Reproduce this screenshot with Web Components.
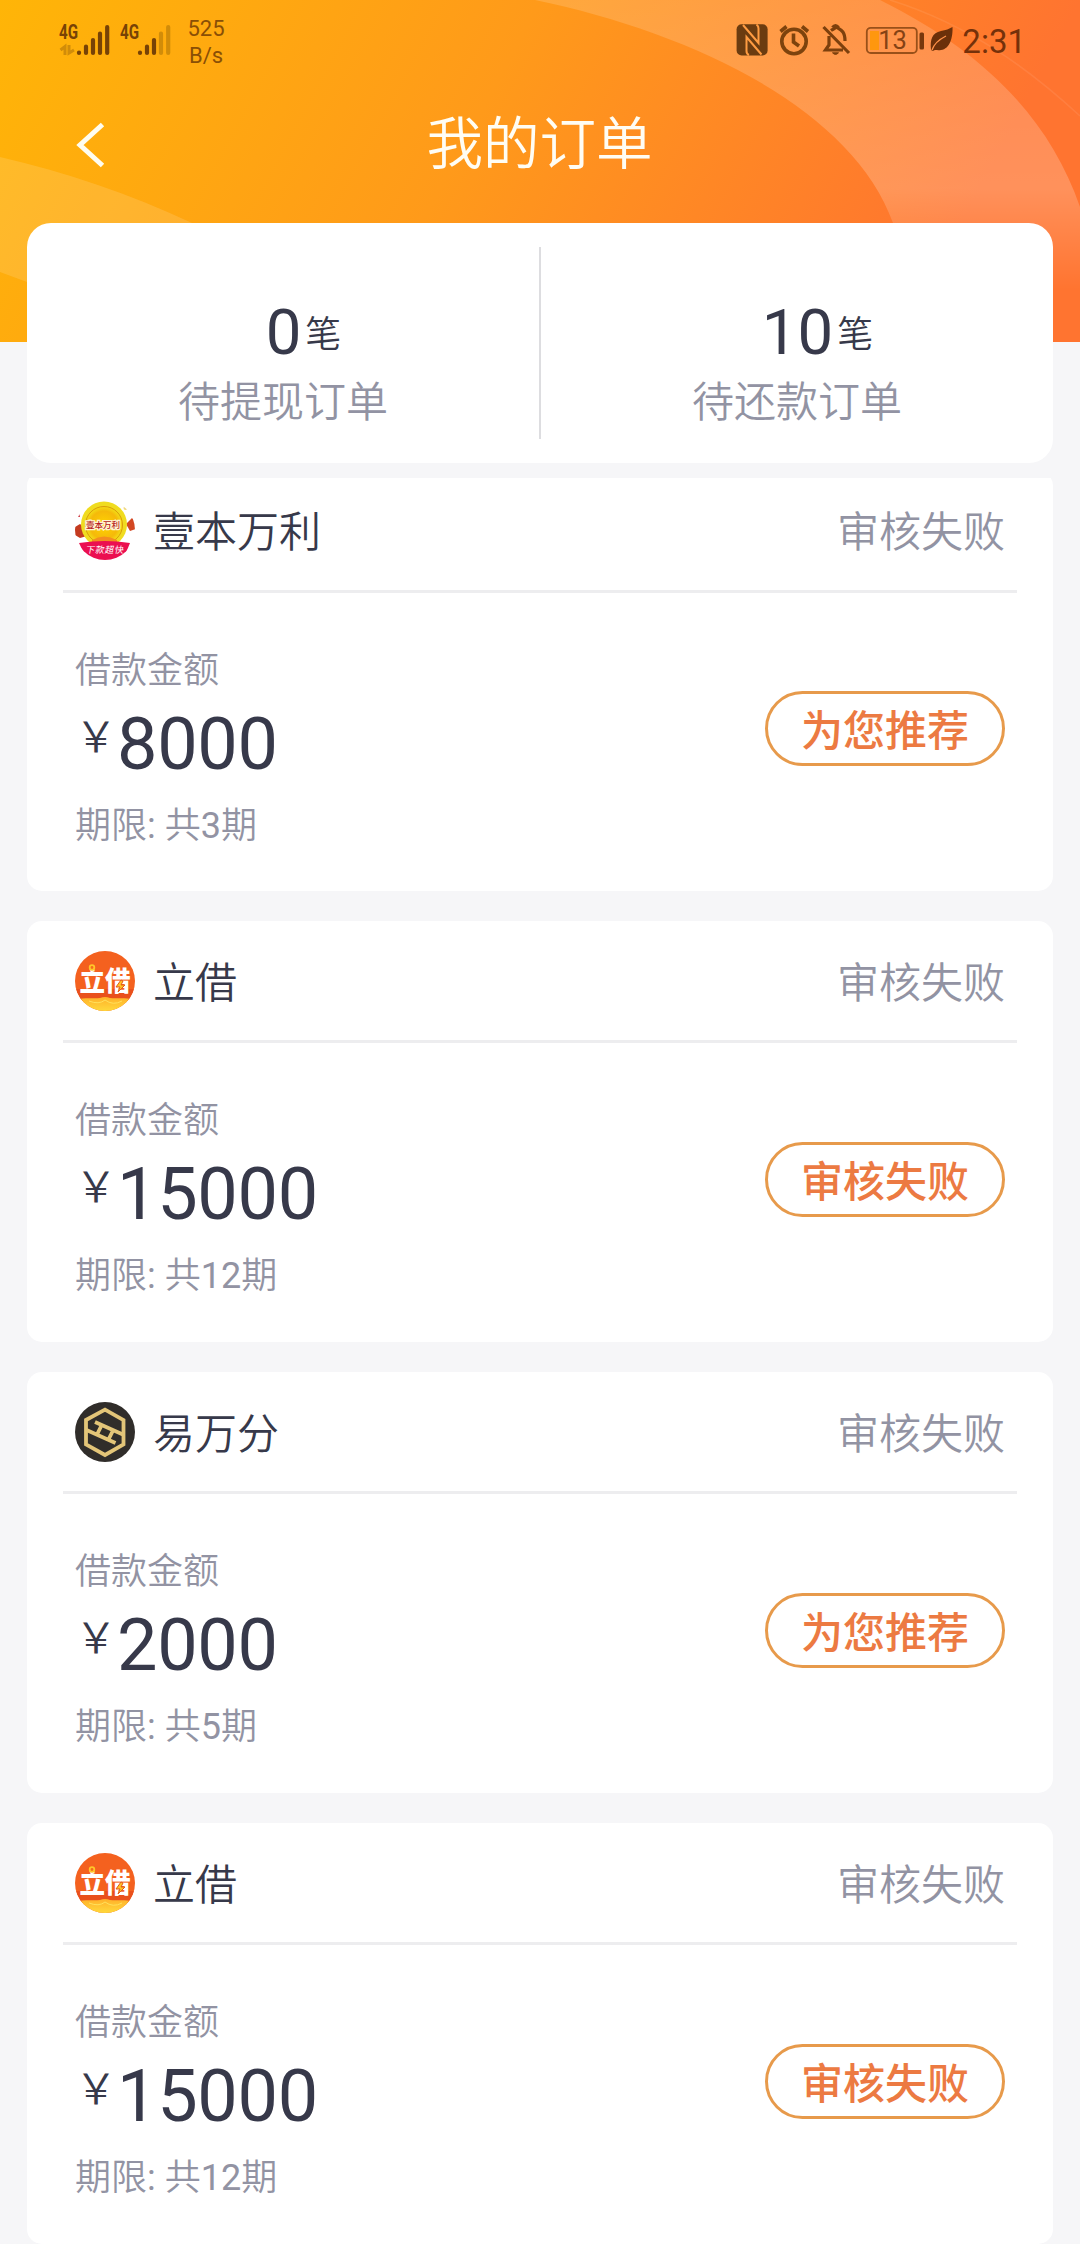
<!DOCTYPE html>
<html lang="zh-CN">
<head>
<meta charset="utf-8">
<title>我的订单</title>
<style>
html,body{margin:0;padding:0}
body{width:1080px;height:2244px;overflow:hidden;background:#f6f6f8;font-family:Roboto,"Noto Sans CJK SC",sans-serif;font-weight:350;color:#37394a}
</style>
</head>
<body>
<orders-page></orders-page>
<script>
const define = (name, html, setup) => customElements.define(name, class extends HTMLElement {
  constructor() {
    super();
    const t = document.createElement('template');
    t.innerHTML = html;
    this.attachShadow({ mode: 'open' }).append(t.content.cloneNode(true));
  }
  connectedCallback() { if (setup) setup(this, this.shadowRoot); }
});

/* Phone status bar */
define('status-bar', `
<style>
:host{display:flex;justify-content:space-between;height:82px;box-sizing:border-box;color:#774206;font-weight:400}
.left{display:flex;padding-left:56px}
.speed{width:50px;margin-left:5px;padding-top:15px;font-size:22px;line-height:27px;text-align:center;color:#8a4f06}
.right{display:flex;padding-right:54px}
.time{font-size:33px;line-height:84px;margin-left:5px;color:#75310a}
svg{display:block}
</style>
<div class="left">
  <svg width="120" height="82" viewBox="56 0 120 82">
    <g fill="#774206" font-family="Roboto" font-weight="700" font-size="19.500">
      <text x="59" y="38.800" textLength="19" lengthAdjust="spacingAndGlyphs">4G</text>
      <text x="120" y="38.800" textLength="19" lengthAdjust="spacingAndGlyphs">4G</text>
    </g>
    <g stroke="#774206" stroke-width="4.2" stroke-linecap="round">
      <path d="M79 52.5V53M86 46.500V53M93 40V53M100 33.500V53M107.2 27V53M140 52.500V53M147 46.500V53M154 40V53"/>
      <path stroke="#d18c09" d="M161 33.500V53M168.2 27V53"/>
    </g>
    <g fill="none" stroke="#d18c09" stroke-width="3"><path d="M60.500 50L65 46.500V55M69 45V53L74 50"/></g>
  </svg>
  <div class="speed">525<br>B/s</div>
</div>
<div class="right">
  <svg width="222" height="82" viewBox="735 0 222 82">
    <rect x="736.600" y="24.300" width="31" height="31.200" rx="5" fill="#6b3c10"/>
    <path d="M743 25L758.500 43V28.500Q758.500 26 756.500 24.500M761.500 54.500L746.500 37V51Q746.500 54 749 55" fill="none" stroke="#ff9c42" stroke-width="2"/>
    <g fill="none" stroke="#7d430d" stroke-width="3.600">
      <circle cx="794" cy="41.500" r="12.200"/>
      <path d="M793.500 33.500V42L799 46M780.500 31.500L786.500 26.500M802 26.500L808 31.500"/>
    </g>
    <g fill="none" stroke="#7d400d" stroke-width="3.200">
      <path d="M823.500 27L849 53M829 36V45L825.500 50H843M831 30.500C833 29 835 29 836 27C841 30 845 31 845 41"/>
      <path d="M832.500 27.500Q835.500 23.500 838.500 27.500"/>
      <path d="M832.500 52.800Q835.500 56 838.500 52.800Z" fill="#7d400d" stroke-width="1"/>
    </g>
    <rect x="866.800" y="27.800" width="50" height="25.200" rx="4" fill="none" stroke="#995019" stroke-width="1.800"/>
    <rect x="870" y="31" width="9" height="19" fill="#ff970e"/>
    <text x="892.500" y="49.300" font-family="Roboto" font-weight="400" font-size="25.500" text-anchor="middle" fill="#854214">13</text>
    <rect x="919.500" y="32.500" width="4.500" height="17" rx="1.500" fill="#78380c"/>
    <path d="M931 50C930 39 932 33 941 31C946 30 949 29 952.500 27C953 37 950 49 941 50C937 51 935 49 933 51Z" fill="#6b300a"/>
    <path d="M932 50C934 44 940 39 946 36" fill="none" stroke="#ff924a" stroke-width="1.300"/>
  </svg>
  <div class="time">2:31</div>
</div>`);

/* Decorated header: gradient and translucent arcs behind the slotted bar */
define('page-header', `
<style>
:host{display:grid;height:342px}
.art,.front{grid-area:1/1}
.art{display:block}
.nav{display:grid;grid-template-columns:129px 1fr 130px;align-items:center;height:126px;color:#fffdf4}
.nav svg{display:block;margin-left:74px}
h1{margin:0;text-align:center;font-size:56.500px;font-weight:350;line-height:125px}
</style>
<svg class="art" width="1080" height="342" viewBox="0 0 1080 342">
  <defs>
    <linearGradient id="base" gradientUnits="userSpaceOnUse" x1="0" y1="0" x2="840" y2="450">
      <stop offset="0" stop-color="#ffb507"/><stop offset=".5" stop-color="#ff9a1a"/><stop offset="1" stop-color="#ff7430"/>
    </linearGradient>
    <linearGradient id="band" x1="0" y1="0" x2="0" y2="1">
      <stop offset="0" stop-color="#fff" stop-opacity=".15"/><stop offset=".65" stop-color="#fff" stop-opacity=".21"/><stop offset="1" stop-color="#fff" stop-opacity="0"/>
    </linearGradient>
  </defs>
  <rect width="1080" height="342" fill="url(#base)"/>
  <path d="M535 0C690 32 852 108 893 223L905 290H1080V207C1050 120 985 52 880 0Z" fill="url(#band)"/>
  <path d="M890 0C970 25 1030 70 1080 116" fill="none" stroke="#fff" stroke-opacity=".08" stroke-width="1.500"/>
  <path d="M0 157C65 172 130 194 192 223V330L27 282L0 272Z" fill="#fff" fill-opacity=".13"/>
</svg>
<div class="front">
  <slot></slot>
  <div class="nav">
    <svg width="34" height="50" viewBox="74 120 34 50"><path d="M102.500 124.500L80 145L102.500 165.500" fill="none" stroke="#fffdf0" stroke-width="5"/></svg>
    <h1></h1>
  </div>
</div>`, (el, r) => { r.querySelector('h1').textContent = el.getAttribute('heading'); });

define('summary-card', `
<style>
:host{display:flex;align-items:center;height:240.500px;margin:-119.500px 27px 0;background:#fff;border-radius:24px;position:relative}
.line{width:2px;height:192px;background:#dddde0}
::slotted(*){flex:1}
</style><slot name="a"></slot><div class="line"></div><slot name="b"></slot>`);

define('summary-item', `
<style>
:host{display:flex;flex-direction:column;align-items:center;padding-top:44px}
.n{display:flex;align-items:flex-start;gap:4px;padding-left:41px;height:76px;line-height:71px;font-size:63.500px;font-weight:400}
small{font-size:36px;line-height:77px;font-weight:350}
.l{font-size:42px;line-height:60px;color:#9293a3}
</style><div class="n"><span></span><small>笔</small></div><div class="l"><slot></slot></div>`,
(el, r) => { r.querySelector('span').textContent = el.getAttribute('count'); });

/* Round lender logos */
const logos = {
  yiben: `<defs><clipPath id="c"><circle cx="30" cy="30" r="30"/></clipPath>
    <radialGradient id="g"><stop offset="0" stop-color="#ffd400"/><stop offset=".75" stop-color="#f5b90a"/><stop offset="1" stop-color="#f2de16"/></radialGradient></defs>
    <g clip-path="url(#c)">
    <path d="M0 27L5 24L11 29L12 36L5 38L0 35Z" fill="#c43b20"/><path d="M51 24L57 18L61 22V29L55 31Z" fill="#d34722"/>
    <path d="M2 17L4 13L5 17Z" fill="#c92c35"/><circle cx="50.500" cy="8" r="2" fill="#efd880"/>
    <circle cx="29" cy="24.500" r="23" fill="#f0dc20"/><circle cx="29" cy="25" r="18.500" fill="url(#g)" stroke="#d99b0b" stroke-width="1"/>
    <path d="M17 40Q29 33 42 40V46H17Z" fill="#f48d20"/>
    <path d="M4 43Q30 39 55 43L48 60H12Z" fill="#eb0f50"/></g>
    <text x="28" y="28" text-anchor="middle" font-size="8.500" font-weight="500" fill="#b71920" stroke="#fff3d0" stroke-width="2.500" paint-order="stroke">壹本万利</text>
    <text x="30" y="53.500" text-anchor="middle" font-size="9" font-weight="400" letter-spacing=".6" fill="#fff" transform="translate(9 0) skewX(-10)">下款超快</text>`,
  lijie: `<defs><clipPath id="c"><circle cx="30" cy="30" r="30"/></clipPath><linearGradient id="g" x2="0" y2="1"><stop stop-color="#ffb12a"/><stop offset="1" stop-color="#ffd93c"/></linearGradient></defs>
    <g clip-path="url(#c)"><rect width="60" height="60" fill="#f4611f"/><rect y="38" width="60" height="12" fill="#e9501c"/>
    <path d="M0 49C11 46 18 48 25 47Q30 45 35 47C42 48 49 46 60 49V60H0Z" fill="url(#g)"/><path d="M14 50Q24 54 30 49Q38 55 47 50" fill="none" stroke="#ffe05c" stroke-width="1"/></g>
    <text x="30" y="39.500" text-anchor="middle" font-size="27" font-weight="900" fill="#fff" textLength="51" lengthAdjust="spacingAndGlyphs">立借</text>
    <circle cx="17" cy="16.500" r="2.300" fill="#f6691d" stroke="#ffc629" stroke-width="1.800"/>
    <path d="M46 29L41 36H45L43 41L50 34H46L48 30Z" fill="#ffc425" stroke="#e45b19" stroke-width="1"/>`,
  yiwan: `<circle cx="30" cy="30" r="30" fill="#302d2a"/>
    <g fill="none" stroke="#e3c578"><path d="M30 7.700L48.500 18V42.500L30 53L11 42.500V18Z" stroke-width="3.800"/>
    <g stroke-width="3.800"><path d="M20 20L49 33M11.500 28L40.500 41M27 22.500L22 32.500M38.500 27.500L33.500 37.500"/></g></g>`
};
define('lender-logo', `<style>:host{display:block;width:60px;height:60px}svg{display:block;overflow:visible;font-family:"Noto Sans CJK SC",sans-serif}</style><svg width="60" height="60" viewBox="0 0 60 60"></svg>`,
(el, r) => { r.querySelector('svg').innerHTML = logos[el.getAttribute('kind')]; });

define('pill-button', `
<style>:host{display:block;box-sizing:border-box;width:240px;height:75px;border:3px solid #e79a4b;border-radius:38px;text-align:center;font-size:42px;line-height:75px;font-weight:500;color:#ec7a42}</style><slot></slot>`);

define('order-card', `
<style>
:host{display:block;box-sizing:border-box;height:420.500px;padding:0 36px;background:#fff;border-radius:15px}
.head{display:flex;align-items:center;height:119px;padding:0 12px;border-bottom:3px solid #ededef;font-size:42px}
.name{flex:1;margin-left:18px}
.name,.status{padding-bottom:3px}
.status,.label,.term{color:#9293a3}
.body{display:flex;justify-content:space-between;padding:0 12px}
.label{margin-top:51px;font-size:36px;line-height:54px}
.amount{display:flex;height:92px;font-size:72px;line-height:93px;font-weight:400;letter-spacing:-.3px}
.amount i{font:350 42px/72px "Noto Sans CJK SC",sans-serif;width:42px}
.term{font-size:36px;line-height:54px;margin-top:9px}
.term b{font-weight:400}
pill-button{margin-top:98.500px}
</style>
<div class="head"><div class="name"></div><div class="status">审核失败</div></div>
<div class="body"><div><div class="label">借款金额</div><div class="amount"><i>￥</i><span></span></div><div class="term">期限<b>: </b>共<b class="months"></b>期</div></div>
<pill-button><slot></slot></pill-button></div>`,
(el, r) => {
  const logo = document.createElement('lender-logo');
  logo.setAttribute('kind', el.getAttribute('logo'));
  r.querySelector('.head').prepend(logo);
  r.querySelector('.name').textContent = el.getAttribute('name');
  r.querySelector('.amount span').textContent = el.getAttribute('amount');
  r.querySelector('.months').textContent = el.getAttribute('term');
});

define('order-list', `
<style>:host{display:flex;flex-direction:column;gap:30.400px;margin:14.700px 27px 0;overflow:hidden}
::slotted(*){flex:none}
::slotted(:first-child){margin-top:-7.200px}</style><slot></slot>`);

define('orders-page', `
<style>:host{display:block;width:1080px;height:2244px;overflow:hidden}</style>
<page-header heading="我的订单"><status-bar></status-bar></page-header>
<summary-card>
  <summary-item slot="a" count="0">待提现订单</summary-item>
  <summary-item slot="b" count="10">待还款订单</summary-item>
</summary-card>
<order-list>
  <order-card logo="yiben" name="壹本万利" amount="8000" term="3">为您推荐</order-card>
  <order-card logo="lijie" name="立借" amount="15000" term="12">审核失败</order-card>
  <order-card logo="yiwan" name="易万分" amount="2000" term="5">为您推荐</order-card>
  <order-card logo="lijie" name="立借" amount="15000" term="12">审核失败</order-card>
</order-list>`);
</script>
</body>
</html>
